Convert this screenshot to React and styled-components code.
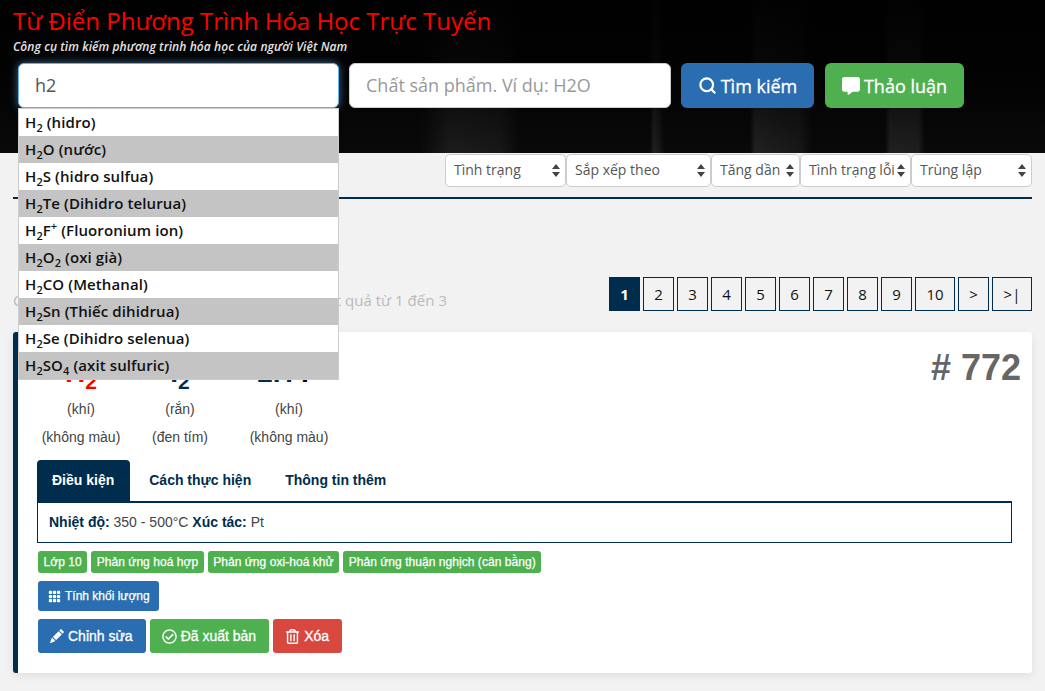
import React from 'react'
import styled, {createGlobalStyle} from 'styled-components'
import {Search} from 'lucide-react'
import {FaCommentAlt, FaRegCheckCircle, FaRegTrashAlt} from 'react-icons/fa'
import {BsGrid3X3GapFill, BsPencilFill} from 'react-icons/bs'

const NAVY = '#002d4d'

const suggestions = [
  [['H', 2], ' (hidro)'],
  [['H', 2, 'O'], ' (nước)'],
  [['H', 2, 'S'], ' (hidro sulfua)'],
  [['H', 2, 'Te'], ' (Dihidro telurua)'],
  [['H', 2, 'F', '+'], ' (Fluoronium ion)'],
  [['H', 2, 'O', 2], ' (oxi già)'],
  [['H', 2, 'CO'], ' (Methanal)'],
  [['H', 2, 'Sn'], ' (Thiếc dihidrua)'],
  [['H', 2, 'Se'], ' (Dihidro selenua)'],
  [['H', 2, 'SO', 4], ' (axit sulfuric)'],
]

const filters = [
  ['Tình trạng', 121],
  ['Sắp xếp theo', 145],
  ['Tăng dần', 89],
  ['Tình trạng lỗi', 111],
  ['Trùng lập', 121],
]

const pages = ['1', '2', '3', '4', '5', '6', '7', '8', '9', '10', '>', '>|']

const tags = ['Lớp 10', 'Phản ứng hoá hợp', 'Phản ứng oxi-hoá khử', 'Phản ứng thuận nghịch (cân bằng)']

const renderFormula = parts => parts.map((part, i) => {
  if (typeof part === 'number') return <sub key={i}>{part}</sub>
  if (part === '+') return <sup key={i}>{part}</sup>
  return <span key={i}>{part}</span>
})

export default function App() {
  return (
    <>
      <GlobalStyle />
      <Header>
        <Title>Từ Điển Phương Trình Hóa Học Trực Tuyến</Title>
        <Subtitle>Công cụ tìm kiếm phương trình hóa học của người Việt Nam</Subtitle>
        <SearchRow>
          <InputWrap width={321}>
            <SearchInput focused defaultValue="h2" />
            <Suggestions>
              {suggestions.map(([formula, name], i) => (
                <Suggestion key={i} odd={i % 2 === 1}>
                  {renderFormula(formula)}{name}
                </Suggestion>
              ))}
            </Suggestions>
          </InputWrap>
          <InputWrap width={322}>
            <SearchInput placeholder="Chất sản phẩm. Ví dụ: H2O" />
          </InputWrap>
          <BigButton color="#2a6db0" width={133}>
            <Search size={19} strokeWidth={2.8} />
            Tìm kiếm
          </BigButton>
          <BigButton color="#4eb04f" width={139}>
            <FaCommentAlt size={18} />
            Thảo luận
          </BigButton>
        </SearchRow>
      </Header>

      <Content>
        <FilterRow>
          {filters.map(([label, width]) => (
            <Select key={label} width={width}>
              <span>{label}</span>
              <svg width="8" height="13" viewBox="0 0 8 13">
                <path d="M4 0 L8 5 H0 Z M4 13 L0 8 H8 Z" fill="#444" />
              </svg>
            </Select>
          ))}
        </FilterRow>
        <Divider />

        <ResultRow>
          <ResultCount>Có 772 kết quả phương trình. Đang hiển thị kết quả từ 1 đến 3</ResultCount>
          <Pagination>
            {pages.map((page, i) => (
              <PageLink key={page} active={i === 0} wide={page.length > 1 && page !== '>'}>{page}</PageLink>
            ))}
          </Pagination>
        </ResultRow>

        <Card>
          <CardTop>
            <Equation>
              <Formula color="#f00">H<sub>2</sub></Formula>
              <Operator>+</Operator>
              <Formula>I<sub>2</sub></Formula>
              <Operator>⇌</Operator>
              <Product>2H<Gas>I</Gas></Product>

              <State>(khí)</State>
              <span />
              <State>(rắn)</State>
              <span />
              <State>(khí)</State>

              <State>(không màu)</State>
              <span />
              <State>(đen tím)</State>
              <span />
              <State>(không màu)</State>
            </Equation>
            <EquationId># 772</EquationId>
          </CardTop>

          <Tabs>
            <Tab active>Điều kiện</Tab>
            <Tab>Cách thực hiện</Tab>
            <Tab>Thông tin thêm</Tab>
          </Tabs>
          <TabPanel>
            <b>Nhiệt độ:</b> 350 - 500°C <b>Xúc tác:</b> Pt
          </TabPanel>

          <Tags>
            {tags.map(tag => <Tag key={tag}>{tag}</Tag>)}
          </Tags>

          <SmallButton>
            <BsGrid3X3GapFill size={13} />
            Tính khối lượng
          </SmallButton>

          <Actions>
            <ActionButton color="#2a6db0">
              <BsPencilFill size={14} />
              Chỉnh sửa
            </ActionButton>
            <ActionButton color="#4eb04f">
              <FaRegCheckCircle size={15} />
              Đã xuất bản
            </ActionButton>
            <ActionButton color="#d9483f">
              <FaRegTrashAlt size={15} />
              Xóa
            </ActionButton>
          </Actions>
        </Card>
      </Content>
    </>
  )
}

const GlobalStyle = createGlobalStyle`
  html, body {
    margin: 0;
    padding: 0;
    background: #f2f2f2;
  }
  body {
    font-family: "Open Sans", "Liberation Sans", sans-serif;
    overflow: hidden;
  }
  * {
    box-sizing: border-box;
  }
`

const Header = styled.header`
  height: 153px;
  padding: 6px 0 0 13px;
  background:
    linear-gradient(to bottom, rgba(0,0,0,.95) 0, rgba(0,0,0,.8) 50%, rgba(0,0,0,.25) 100%),
    linear-gradient(to right, transparent 650px, #2c2c2c 654px, #1d1d1d 660px, transparent 664px, transparent 750px, #2c2c2c 755px, #202020 800px, transparent 812px),
    linear-gradient(to right, transparent 885px, #2c2c2c 890px, #2a2a2a 918px, transparent 925px),
    linear-gradient(to right, transparent 30px, #222 60px, #1a1a1a 80px, transparent 95px, transparent 420px, #262626 450px, #202020 500px, transparent 520px),
    #0c0c0c;
`

const Title = styled.h1`
  margin: 0;
  font-size: 24px;
  line-height: 29px;
  font-weight: 400;
  color: #f00;
`

const Subtitle = styled.div`
  margin-top: 3px;
  font-size: 12px;
  line-height: 17px;
  font-style: italic;
  font-weight: 600;
  letter-spacing: .1px;
  color: #e4e4e4;
`

const SearchRow = styled.div`
  display: flex;
  align-items: flex-start;
  gap: 10px;
  margin: 8px 0 0 5px;

  button:last-child {
    margin-left: 1px;
  }
`

const InputWrap = styled.div`
  position: relative;
  width: ${p => p.width}px;
`

const SearchInput = styled.input.withConfig({shouldForwardProp: p => p !== 'focused'})`
  display: block;
  width: 100%;
  height: 45px;
  padding: 0 16px 2px;
  font-family: "Open Sans", sans-serif;
  font-size: 18px;
  color: #555;
  background: #fff;
  border: 1px solid ${p => p.focused ? '#66afe9' : '#ccc'};
  border-radius: 6px;
  outline: none;
  box-shadow: ${p => p.focused ? '0 0 8px rgba(102,175,233,.6)' : 'none'};

  &::placeholder {
    color: #999;
    opacity: 1;
  }
`

const Suggestions = styled.div`
  position: absolute;
  top: 45px;
  left: 0;
  width: 321px;
  z-index: 5;
  background: #fff;
  border: 1px solid #ccc;
`

const Suggestion = styled.div.withConfig({shouldForwardProp: p => p !== 'odd'})`
  height: 27px;
  padding-left: 6px;
  font-size: 15px;
  line-height: 27px;
  font-weight: 600;
  letter-spacing: .1px;
  color: #111;
  white-space: pre;
  background: ${p => p.odd ? '#c4c4c4' : '#fff'};

  sub, sup {
    font-size: 11px;
    line-height: 0;
  }
`

const BigButton = styled.button`
  display: flex;
  align-items: center;
  justify-content: center;
  gap: 4px;
  width: ${p => p.width}px;
  height: 45px;
  padding: 0;
  font-family: "Open Sans", sans-serif;
  font-size: 18px;
  -webkit-text-stroke: .3px #fff;
  color: #fff;
  background: ${p => p.color};
  border: 0;
  border-radius: 6px;
`

const Content = styled.main`
  padding: 1px 13px 18px;
`

const FilterRow = styled.div`
  display: flex;
  justify-content: flex-end;
`

const Select = styled.div`
  display: flex;
  align-items: center;
  justify-content: space-between;
  width: ${p => p.width}px;
  height: 33px;
  padding: 0 5px 0 8px;
  font-size: 14px;
  color: #555;
  background: #fff;
  border: 1px solid #ccc;
  border-radius: 5px;

  span {
    margin-top: -2px;
  }
`

const Divider = styled.div`
  height: 2px;
  margin-top: 10px;
  background: ${NAVY};
`

const ResultRow = styled.div`
  display: flex;
  align-items: center;
  justify-content: space-between;
  margin-top: 78px;
`

const ResultCount = styled.div`
  width: 434px;
  margin-top: 11px;
  font-size: 15px;
  color: #bbb;
  white-space: nowrap;
  text-align-last: justify;
`

const Pagination = styled.div`
  display: flex;
  gap: 3px;
`

const PageLink = styled.a.withConfig({shouldForwardProp: p => p !== 'active' && p !== 'wide'})`
  display: flex;
  align-items: center;
  justify-content: center;
  width: ${p => p.wide ? 40 : 31}px;
  height: 34px;
  font-size: 15px;
  font-weight: ${p => p.active ? 700 : 400};
  color: ${p => p.active ? '#fff' : '#111'};
  background: ${p => p.active ? NAVY : 'transparent'};
  border: 1px solid ${NAVY};
`

const Card = styled.section`
  height: 341px;
  margin-top: 21px;
  padding: 0 20px 0 19px;
  font-family: "Liberation Sans", Arial, sans-serif;
  background: #fff;
  border-left: 5px solid ${NAVY};
  border-radius: 3px;
  box-shadow: 0 3px 10px rgba(0, 0, 0, .08);
`

const CardTop = styled.div`
  display: flex;
  align-items: flex-start;
  justify-content: space-between;
  height: 128px;
  margin-right: -9px;
`

const Equation = styled.div`
  display: grid;
  grid-template-columns: 88px 23px 64px 32px 90px;
  grid-template-rows: 36px 28px 28px;
  margin-top: 27px;
  text-align: center;
`

const Formula = styled.div`
  font-size: 28px;
  line-height: 28px;
  height: 28px;
  font-weight: 700;
  color: ${p => p.color || NAVY};
  white-space: nowrap;

  sub {
    font-size: 21px;
    line-height: 0;
  }
`

const Product = styled(Formula)`
  padding-right: 12px;
`

const Gas = styled.span`
  margin-left: 8px;
  color: #000;
`

const Operator = styled.div`
  font-size: 24px;
  line-height: 28px;
  color: #777;
`

const State = styled.div`
  font-size: 14px;
  line-height: 28px;
  color: #444;
  white-space: nowrap;
`

const EquationId = styled.div`
  margin-top: 16px;
  font-size: 36px;
  line-height: 40px;
  font-weight: 700;
  color: #666;
`

const Tabs = styled.div`
  display: flex;
  height: 41px;
`

const Tab = styled.div`
  padding: ${p => p.active ? '0 16px 0 15px' : '0 15px 0 19px'};
  font-size: 14px;
  line-height: 41px;
  font-weight: 700;
  color: ${p => p.active ? '#fff' : NAVY};
  background: ${p => p.active ? NAVY : 'transparent'};
  border-radius: 4px 4px 0 0;
`

const TabPanel = styled.div`
  height: 42px;
  padding-left: 11px;
  font-size: 14px;
  line-height: 38px;
  color: #444;
  border: 1px solid ${NAVY};
  border-top-width: 2px;

  b {
    color: ${NAVY};
  }
`

const Tags = styled.div`
  display: flex;
  gap: 4px;
  margin: 8px 0 0 1px;
`

const Tag = styled.span`
  padding: 0 5.5px;
  font-size: 12px;
  line-height: 22px;
  letter-spacing: .05px;
  -webkit-text-stroke: .25px #fff;
  color: #fff;
  background: #4eb04f;
  border-radius: 3px;
`

const SmallButton = styled.button`
  display: flex;
  align-items: center;
  gap: 4px;
  height: 30px;
  margin: 8px 0 0 1px;
  padding: 0 9px 0 10px;
  font-family: "Liberation Sans", Arial, sans-serif;
  font-size: 12px;
  -webkit-text-stroke: .25px #fff;
  color: #fff;
  background: #2a6db0;
  border: 0;
  border-radius: 3px;
`

const Actions = styled.div`
  display: flex;
  gap: 4px;
  margin: 8px 0 0 1px;
`

const ActionButton = styled.button`
  display: flex;
  align-items: center;
  gap: 4px;
  height: 34px;
  padding: 0 13px 0 12px;
  font-family: "Liberation Sans", Arial, sans-serif;
  font-size: 14px;
  -webkit-text-stroke: .3px #fff;
  color: #fff;
  background: ${p => p.color};
  border: 0;
  border-radius: 3px;
`
